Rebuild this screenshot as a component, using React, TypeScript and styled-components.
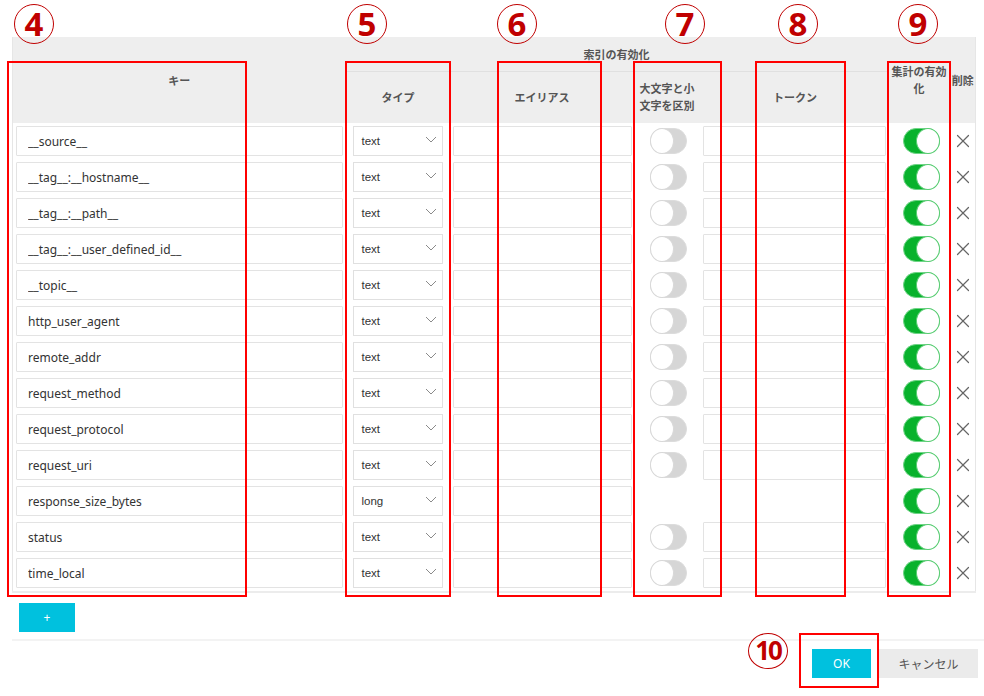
import styled, { createGlobalStyle } from "styled-components";
import { X } from "lucide-react";

const GlobalStyle = createGlobalStyle`
  body {
    margin: 0;
    background: #fff;
    font-family: "Noto Sans", "Noto Sans CJK JP", sans-serif;
  }
`;

type Field = { key: string; type: string; caseSensitive: boolean };

const fields: Field[] = [
  { key: "__source__", type: "text", caseSensitive: true },
  { key: "__tag__:__hostname__", type: "text", caseSensitive: true },
  { key: "__tag__:__path__", type: "text", caseSensitive: true },
  { key: "__tag__:__user_defined_id__", type: "text", caseSensitive: true },
  { key: "__topic__", type: "text", caseSensitive: true },
  { key: "http_user_agent", type: "text", caseSensitive: true },
  { key: "remote_addr", type: "text", caseSensitive: true },
  { key: "request_method", type: "text", caseSensitive: true },
  { key: "request_protocol", type: "text", caseSensitive: true },
  { key: "request_uri", type: "text", caseSensitive: true },
  { key: "response_size_bytes", type: "long", caseSensitive: false },
  { key: "status", type: "text", caseSensitive: true },
  { key: "time_local", type: "text", caseSensitive: true },
];

// annotation overlays (numbers + red frames drawn over the screenshot)
const markers = [
  { n: "4", x: 14, y: 4 },
  { n: "5", x: 347, y: 4 },
  { n: "6", x: 497, y: 4 },
  { n: "7", x: 665, y: 4 },
  { n: "8", x: 778, y: 4 },
  { n: "9", x: 898, y: 4 },
];

const frames = [
  { x: 7, y: 61, w: 240, h: 536 },
  { x: 345, y: 61, w: 106, h: 536 },
  { x: 497, y: 61, w: 105, h: 536 },
  { x: 633, y: 61, w: 89, h: 536 },
  { x: 755, y: 61, w: 91, h: 536 },
  { x: 887, y: 61, w: 64, h: 536 },
  { x: 799, y: 633, w: 80, h: 55 },
];

const App = () => {
  return (
    <Page>
      <GlobalStyle />
      <Table>
        <colgroup>
          <col style={{ width: 333 }} />
          <col style={{ width: 105 }} />
          <col style={{ width: 183 }} />
          <col style={{ width: 69 }} />
          <col style={{ width: 185 }} />
          <col style={{ width: 63 }} />
          <col style={{ width: 25 }} />
        </colgroup>
        <thead>
          <HeadRow $h={34}>
            <Th rowSpan={2}>キー</Th>
            <GroupTh colSpan={4}>索引の有効化</GroupTh>
            <Th rowSpan={2} $pad={4}>集計の有効化</Th>
            <Th rowSpan={2} $pad={0}>削除</Th>
          </HeadRow>
          <HeadRow $h={52}>
            <Th>タイプ</Th>
            <Th>エイリアス</Th>
            <Th $left $pad={6}>大文字と小文字を区別</Th>
            <Th>トークン</Th>
          </HeadRow>
        </thead>
        <tbody>
          {fields.map((f) => (
            <Row key={f.key}>
              <KeyCell>
                <TextField $w={327} $pad={11} readOnly defaultValue={f.key} />
              </KeyCell>
              <TypeCell>
                <SelectBox>
                  <span>{f.type}</span>
                  <svg width="12" height="7" viewBox="0 0 12 7">
                    <polyline points="1,1 6,6 11,1" fill="none" stroke="#8a8a8a" strokeWidth="1" />
                  </svg>
                </SelectBox>
              </TypeCell>
              <AliasCell>
                <TextField $w={179} $pad={8} readOnly defaultValue="" />
              </AliasCell>
              <CenterCell>{f.caseSensitive && <Toggle $on={false} />}</CenterCell>
              <Td>
                {f.caseSensitive && <TextField $w={183} $pad={8} readOnly defaultValue="" />}
              </Td>
              <AggCell>
                <Toggle $on />
              </AggCell>
              <CenterCell>
                <DeleteIcon size={22} strokeWidth={1.3} />
              </CenterCell>
            </Row>
          ))}
        </tbody>
      </Table>

      <AddButton>+</AddButton>
      <Divider />
      <Footer>
        <OkButton>OK</OkButton>
        <CancelButton>キャンセル</CancelButton>
      </Footer>

      {markers.map((m) => (
        <Marker key={m.n} $x={m.x} $y={m.y}>
          {m.n}
        </Marker>
      ))}
      <Marker $x={748} $y={633} $small>
        10
      </Marker>
      {frames.map((f, i) => (
        <Frame key={i} $x={f.x} $y={f.y} $w={f.w} $h={f.h} />
      ))}
    </Page>
  );
};

const Page = styled.div`
  position: relative;
  width: 984px;
  height: 696px;
  padding-top: 37px;
  box-sizing: border-box;
  overflow: hidden;
`;

const Table = styled.table`
  margin-left: 12px;
  width: 963px;
  table-layout: fixed;
  border-collapse: collapse;
  border-left: 1px solid #e6e6e6;
  border-right: 1px solid #e6e6e6;
  border-bottom: 2px solid #ececec;
`;

const HeadRow = styled.tr<{ $h: number }>`
  height: ${({ $h }) => $h}px;
  background: #eeeeee;
`;

const Th = styled.th<{ $left?: boolean; $pad?: number }>`
  padding: 0 ${({ $pad }) => ($pad ?? 2)}px;
  font-size: 11px;
  line-height: 17px;
  font-weight: 700;
  color: #555;
  text-align: ${({ $left }) => ($left ? "left" : "center")};
  vertical-align: middle;
  word-break: break-all;
`;

const GroupTh = styled(Th)`
  border-bottom: 1px solid #e0e0e0;
  padding-top: 2px;
`;

const Row = styled.tr`
  height: 36px;
`;

const Td = styled.td`
  padding: 3px 0;
  height: 30px;
  line-height: 0;
  vertical-align: middle;
`;

const KeyCell = styled(Td)`
  padding-left: 3px;
`;

const TypeCell = styled(Td)`
  padding-left: 7px;
`;

const AliasCell = styled(Td)`
  padding-left: 2px;
`;

const AggCell = styled(Td)`
  padding-left: 15px;
`;

const CenterCell = styled(Td)`
  text-align: center;
`;

const TextField = styled.input<{ $w: number; $pad: number }>`
  display: block;
  box-sizing: border-box;
  width: ${({ $w }) => $w}px;
  height: 30px;
  padding: 0 ${({ $pad }) => $pad}px;
  border: 1px solid #e3e3e3;
  border-radius: 1px;
  background: #fff;
  font: 12px "Noto Sans", "Noto Sans CJK JP", sans-serif;
  color: #333;
  outline: none;
`;

const SelectBox = styled.div`
  box-sizing: border-box;
  width: 90px;
  height: 30px;
  padding: 0 5px 0 8px;
  display: flex;
  align-items: center;
  justify-content: space-between;
  border: 1px solid #e0e0e0;
  font: 11.5px/14px "Liberation Sans", Arial, sans-serif;
  color: #333;

  svg {
    margin-top: -4px;
  }
`;

const Toggle = styled.span<{ $on: boolean }>`
  position: relative;
  display: inline-block;
  vertical-align: middle;
  box-sizing: border-box;
  width: 37px;
  height: 26px;
  border-radius: 13px;
  background: ${({ $on }) => ($on ? "#08b22c" : "#d6d6d6")};
  border: 1px solid ${({ $on }) => ($on ? "#6fd486" : "#dcdcdc")};

  &::after {
    content: "";
    position: absolute;
    top: -1px;
    ${({ $on }) => ($on ? "right: -1px;" : "left: -1px;")}
    width: 24px;
    height: 26px;
    box-sizing: border-box;
    border-radius: 50%;
    background: #fff;
    border: 1px solid ${({ $on }) => ($on ? "#58cc72" : "#d8d8d8")};
  }
`;

const DeleteIcon = styled(X)`
  color: #666;
  vertical-align: middle;
`;

const AddButton = styled.button`
  display: block;
  margin: 10px 0 0 19px;
  width: 56px;
  height: 29px;
  border: 0;
  background: #00c1de;
  color: #fff;
  font: 12px "Noto Sans", sans-serif;
  padding: 0;
`;

const Divider = styled.div`
  margin: 7px 0 0 12px;
  height: 2px;
  background: #f3f3f3;
`;

const Footer = styled.div`
  display: flex;
  justify-content: flex-end;
  gap: 8px;
  margin-top: 8px;
  padding-right: 6px;
`;

const FooterButton = styled.button`
  height: 29px;
  border: 0;
  padding: 0;
  font: 12px "Noto Sans", "Noto Sans CJK JP", sans-serif;
`;

const OkButton = styled(FooterButton)`
  width: 59px;
  background: #00c1de;
  color: #fff;
`;

const CancelButton = styled(FooterButton)`
  width: 99px;
  background: #ebebeb;
  color: #555;
`;

const Marker = styled.div<{ $x: number; $y: number; $small?: boolean }>`
  position: absolute;
  left: ${({ $x }) => $x}px;
  top: ${({ $y }) => $y}px;
  box-sizing: border-box;
  width: 40px;
  height: ${({ $small }) => ($small ? 36 : 40)}px;
  border: 1px solid #c00000;
  border-radius: 50%;
  color: #c00000;
  font-family: "Noto Sans", sans-serif;
  font-weight: 700;
  font-size: ${({ $small }) => ($small ? 26 : 33)}px;
  letter-spacing: ${({ $small }) => ($small ? "-2px" : "0")};
  line-height: ${({ $small }) => ($small ? 33 : 38)}px;
  text-align: center;
`;

const Frame = styled.div<{ $x: number; $y: number; $w: number; $h: number }>`
  position: absolute;
  left: ${({ $x }) => $x}px;
  top: ${({ $y }) => $y}px;
  width: ${({ $w }) => $w}px;
  height: ${({ $h }) => $h}px;
  box-sizing: border-box;
  border: 2px solid #ff0000;
  pointer-events: none;
`;

export default App;
